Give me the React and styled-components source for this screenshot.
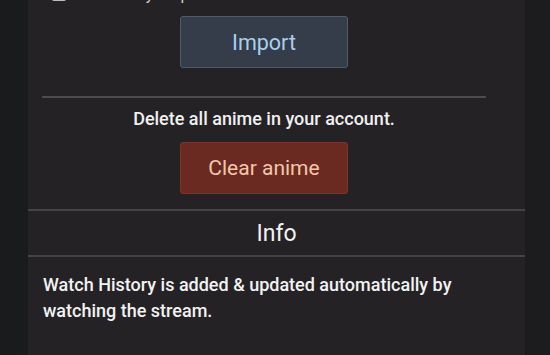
import styled, { createGlobalStyle } from 'styled-components';

const Global = createGlobalStyle`
  html, body {
    margin: 0;
    padding: 0;
    background: #1b1b1e;
    font-family: Roboto, 'Liberation Sans', sans-serif;
    overflow: hidden;
  }
`;

const Page = styled.div`
  width: 550px;
  height: 355px;
  display: flex;
  background: linear-gradient(90deg, #1a1b1d 0, #1c1c1f 100%);
  overflow: hidden;
`;

const Panel = styled.div`
  margin-left: 28px;
  width: 497px;
  background: #242225;
  display: flex;
  flex-direction: column;
`;

const Section = styled.div`
  padding: 0 39px 0 14px;
  display: flex;
  flex-direction: column;
  align-items: center;
`;

const CutRow = styled.div`
  align-self: stretch;
  display: flex;
  align-items: center;
  gap: 8px;
  margin-top: -14px;
  height: 16px;
  padding-left: 10px;
  color: #cfcfcf;
  font-size: 16px;
`;

const Box = styled.span`
  width: 14px;
  height: 14px;
  border: 2px solid #bdbdbd;
  border-radius: 2px;
  box-sizing: border-box;
`;

const Button = styled.button`
  width: 168px;
  height: 52px;
  border-radius: 3px;
  font-family: Roboto, 'Liberation Sans', sans-serif;
  font-size: ${p => (p.danger ? '21px' : '21.5px')};
  cursor: pointer;
  border: 1px solid ${p => (p.danger ? '#7d3429' : '#4e5c69')};
  background: ${p => (p.danger ? '#6a2a22' : '#343d49')};
  color: ${p => (p.danger ? '#f5c6aa' : '#a8d0ec')};
`;

const Rule = styled.hr`
  align-self: stretch;
  border: none;
  height: 2px;
  background: #4d4b4f;
  margin: 0;
`;

const Note = styled.p`
  margin: 0;
  color: #f0f0f0;
  font-size: 18px;
  font-weight: 500;
  line-height: 22px;
`;

const Header = styled.div`
  height: 44px;
  display: flex;
  align-items: center;
  justify-content: center;
  color: #f2f2f2;
  font-size: 23px;
  border-top: 2px solid #454347;
  border-bottom: 2px solid #454347;
`;

const Body = styled.p`
  margin: 0;
  padding: 15px 40px 0 15px;
  color: #f2f2f2;
  font-size: 18px;
  font-weight: 500;
  line-height: 26px;
`;

export default function App() {
  return (
    <>
      <Global />
      <Page>
        <Panel>
          <Section>
            <CutRow>
              <Box />
              <span>Overwrite your previous list</span>
            </CutRow>
            <Button style={{ marginTop: 14 }}>Import</Button>
            <Rule style={{ marginTop: 28 }} />
            <Note style={{ marginTop: 10 }}>Delete all anime in your account.</Note>
            <Button danger style={{ marginTop: 12 }}>Clear anime</Button>
          </Section>
          <Header style={{ marginTop: 15 }}>Info</Header>
          <Body>Watch History is added &amp; updated automatically by watching the stream.</Body>
        </Panel>
      </Page>
    </>
  );
}
